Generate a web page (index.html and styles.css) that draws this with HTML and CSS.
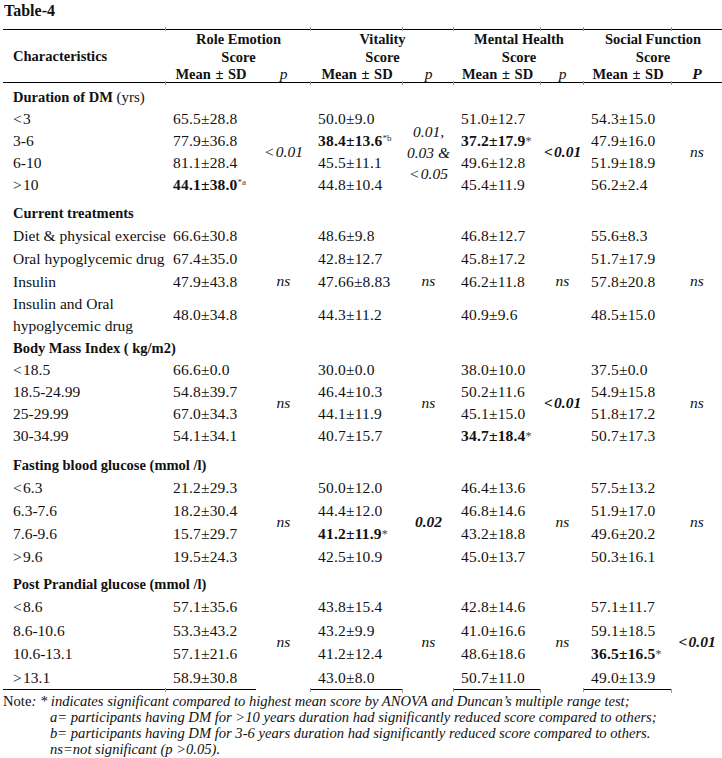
FILE: index.html
```html
<!DOCTYPE html>
<html lang="en">
<head>
<meta charset="utf-8">
<title>Table-4</title>
<link rel="stylesheet" href="styles.css">
</head>
<body>
<div class="title">Table-4</div>
<table class="t">
  <colgroup>
    <col class="w-char"><col class="w-m1"><col class="w-p1"><col class="w-m2"><col class="w-p2"><col class="w-m3"><col class="w-p3"><col class="w-m4"><col class="w-p4">
  </colgroup>
  <thead>
    <tr class="hr1">
      <th rowspan="2" class="hc">Characteristics</th>
      <th colspan="2">Role Emotion<br>Score</th>
      <th colspan="2">Vitality<br>Score</th>
      <th colspan="2">Mental Health<br>Score</th>
      <th colspan="2">Social Function<br>Score</th>
    </tr>
    <tr class="hr2">
      <th class="tk">Mean ± SD</th><th class="pi">p</th>
      <th class="tk">Mean ± SD</th><th class="pi tk">p</th>
      <th class="tk">Mean ± SD</th><th class="pi tk">p</th>
      <th class="tk">Mean ± SD</th><th class="pi tk">P</th>
    </tr>
  </thead>
  <tbody>
    <tr class="g g1"><td colspan="9" class="gh">Duration of DM <span class="rg">(yrs)</span></td></tr>
    <tr class="r22">
      <td class="c">&lt;&#8202;3</td><td class="v">65.5±28.8</td>
      <td class="p" rowspan="4">&lt;&#8202;0.01</td>
      <td class="v">50.0±9.0</td>
      <td class="p multi" rowspan="4">0.01,<br>0.03 &amp;<br>&lt;&#8202;0.05</td>
      <td class="v">51.0±12.7</td>
      <td class="p pb" rowspan="4">&lt;&#8202;0.01</td>
      <td class="v">54.3±15.0</td>
      <td class="p" rowspan="4">ns</td>
    </tr>
    <tr class="r22">
      <td class="c">3-6</td><td class="v">77.9±36.8</td>
      <td class="v"><b>38.4±13.6</b><span class="sup">*b</span></td>
      <td class="v"><b>37.2±17.9</b><span class="ast">*</span></td>
      <td class="v">47.9±16.0</td>
    </tr>
    <tr class="r22">
      <td class="c">6-10</td><td class="v">81.1±28.4</td>
      <td class="v">45.5±11.1</td>
      <td class="v">49.6±12.8</td>
      <td class="v">51.9±18.9</td>
    </tr>
    <tr class="r22">
      <td class="c">&gt;&#8202;10</td><td class="v"><b>44.1±38.0</b><span class="sup">*a</span></td>
      <td class="v">44.8±10.4</td>
      <td class="v">45.4±11.9</td>
      <td class="v">56.2±2.4</td>
    </tr>

    <tr class="g g2"><td colspan="9" class="gh">Current treatments</td></tr>
    <tr class="r23">
      <td class="c">Diet &amp; physical exercise</td><td class="v">66.6±30.8</td>
      <td class="p" rowspan="4">ns</td>
      <td class="v">48.6±9.8</td>
      <td class="p" rowspan="4">ns</td>
      <td class="v">46.8±12.7</td>
      <td class="p" rowspan="4">ns</td>
      <td class="v">55.6±8.3</td>
      <td class="p" rowspan="4">ns</td>
    </tr>
    <tr class="r23">
      <td class="c">Oral hypoglycemic drug</td><td class="v">67.4±35.0</td>
      <td class="v">42.8±12.7</td>
      <td class="v">45.8±17.2</td>
      <td class="v">51.7±17.9</td>
    </tr>
    <tr class="r23">
      <td class="c">Insulin</td><td class="v">47.9±43.8</td>
      <td class="v">47.66±8.83</td>
      <td class="v">46.2±11.8</td>
      <td class="v">57.8±20.8</td>
    </tr>
    <tr class="r43">
      <td class="c two">Insulin and Oral<br>hypoglycemic drug</td><td class="v">48.0±34.8</td>
      <td class="v">44.3±11.2</td>
      <td class="v">40.9±9.6</td>
      <td class="v">48.5±15.0</td>
    </tr>

    <tr class="g g3"><td colspan="9" class="gh">Body Mass Index ( kg/m2)</td></tr>
    <tr class="r22">
      <td class="c">&lt;&#8202;18.5</td><td class="v">66.6±0.0</td>
      <td class="p" rowspan="4">ns</td>
      <td class="v">30.0±0.0</td>
      <td class="p" rowspan="4">ns</td>
      <td class="v">38.0±10.0</td>
      <td class="p pb" rowspan="4">&lt;&#8202;0.01</td>
      <td class="v">37.5±0.0</td>
      <td class="p" rowspan="4">ns</td>
    </tr>
    <tr class="r22">
      <td class="c">18.5-24.99</td><td class="v">54.8±39.7</td>
      <td class="v">46.4±10.3</td>
      <td class="v">50.2±11.6</td>
      <td class="v">54.9±15.8</td>
    </tr>
    <tr class="r22">
      <td class="c">25-29.99</td><td class="v">67.0±34.3</td>
      <td class="v">44.1±11.9</td>
      <td class="v">45.1±15.0</td>
      <td class="v">51.8±17.2</td>
    </tr>
    <tr class="r22">
      <td class="c">30-34.99</td><td class="v">54.1±34.1</td>
      <td class="v">40.7±15.7</td>
      <td class="v"><b>34.7±18.4</b><span class="ast">*</span></td>
      <td class="v">50.7±17.3</td>
    </tr>

    <tr class="g g4"><td colspan="9" class="gh">Fasting blood glucose (mmol /l)</td></tr>
    <tr class="r23">
      <td class="c">&lt;&#8202;6.3</td><td class="v">21.2±29.3</td>
      <td class="p" rowspan="4">ns</td>
      <td class="v">50.0±12.0</td>
      <td class="p pb" rowspan="4">0.02</td>
      <td class="v">46.4±13.6</td>
      <td class="p" rowspan="4">ns</td>
      <td class="v">57.5±13.2</td>
      <td class="p" rowspan="4">ns</td>
    </tr>
    <tr class="r23">
      <td class="c">6.3-7.6</td><td class="v">18.2±30.4</td>
      <td class="v">44.4±12.0</td>
      <td class="v">46.8±14.6</td>
      <td class="v">51.9±17.0</td>
    </tr>
    <tr class="r23">
      <td class="c">7.6-9.6</td><td class="v">15.7±29.7</td>
      <td class="v"><b>41.2±11.9</b><span class="ast">*</span></td>
      <td class="v">43.2±18.8</td>
      <td class="v">49.6±20.2</td>
    </tr>
    <tr class="r23">
      <td class="c">&gt;&#8202;9.6</td><td class="v">19.5±24.3</td>
      <td class="v">42.5±10.9</td>
      <td class="v">45.0±13.7</td>
      <td class="v">50.3±16.1</td>
    </tr>

    <tr class="g g5"><td colspan="9" class="gh">Post Prandial glucose (mmol /l)</td></tr>
    <tr class="r24">
      <td class="c">&lt;&#8202;8.6</td><td class="v">57.1±35.6</td>
      <td class="p" rowspan="4">ns</td>
      <td class="v">43.8±15.4</td>
      <td class="p tkb" rowspan="4">ns</td>
      <td class="v">42.8±14.6</td>
      <td class="p tkb" rowspan="4">ns</td>
      <td class="v">57.1±11.7</td>
      <td class="p pb tkb" rowspan="4">&lt;&#8202;0.01</td>
    </tr>
    <tr class="r23">
      <td class="c">8.6-10.6</td><td class="v">53.3±43.2</td>
      <td class="v">43.2±9.9</td>
      <td class="v">41.0±16.6</td>
      <td class="v">59.1±18.5</td>
    </tr>
    <tr class="r24">
      <td class="c">10.6-13.1</td><td class="v">57.1±21.6</td>
      <td class="v">41.2±12.4</td>
      <td class="v">48.6±18.6</td>
      <td class="v"><b>36.5±16.5</b><span class="ast">*</span></td>
    </tr>
    <tr class="r23 last">
      <td class="c">&gt;&#8202;13.1</td><td class="v tkb">58.9±30.8</td>
      <td class="v tkb">43.0±8.0</td>
      <td class="v tkb">50.7±11.0</td>
      <td class="v tkb">49.0±13.9</td>
    </tr>
  </tbody>
</table>
<div class="note">
  <p class="nl">Note<i>: * indicates significant compared to highest mean score by ANOVA and Duncan’s multiple range test;</i></p>
  <p class="nl ind"><i>a= participants having DM for &gt;10 years duration had significantly reduced score compared to others;</i></p>
  <p class="nl ind"><i>b= participants having DM for 3-6 years duration had significantly reduced score compared to others.</i></p>
  <p class="nl ind"><i>ns=not significant (p &gt;0.05).</i></p>
</div>
</body>
</html>
```

FILE: styles.css
```css
html, body {
  margin: 0;
  padding: 0;
  background: #ffffff;
}

body {
  font-family: "Liberation Serif", "Times New Roman", serif;
  color: #111111;
  width: 722px;
  overflow: hidden;
}

.title {
  height: 29px;
  padding-left: 4px;
  font-size: 16px;
  font-weight: bold;
  line-height: 22px;
}

.t {
  border-collapse: collapse;
  table-layout: fixed;
  width: 719px;
  margin-left: 3px;
  font-size: 15.5px;
}

.w-char { width: 163px; }
.w-m1 { width: 90px; }
.w-p1 { width: 55px; }
.w-m2 { width: 92px; }
.w-p2 { width: 51px; }
.w-m3 { width: 87px; }
.w-p3 { width: 43px; }
.w-m4 { width: 88px; }
.w-p4 { width: 50px; }

th {
  padding: 0;
  font-size: 14.5px;
  font-weight: bold;
  text-align: center;
  white-space: nowrap;
}

.hr1 th {
  border-top: 1px solid #000;
  height: 36px;
  line-height: 18px;
  vertical-align: top;
}

.hr1 th.hc {
  text-align: left;
  padding-left: 10px;
  vertical-align: middle;
  border-bottom: 1px solid #000;
}

.hr2 th {
  position: relative;
  height: 16px;
  line-height: 16px;
  border-bottom: 1px solid #000;
  vertical-align: top;
  word-spacing: 1px;
}

.hr2 th.pi {
  font-style: italic;
  font-weight: normal;
  font-size: 15.5px;
}

.hr2 th.pi:last-child {
  font-weight: bold;
}

/* faint grid ticks where the Word table's cell edges meet the rules */
.hr2 th.tk::before,
.hr2 th.tk::after,
td.tkb::after {
  content: "";
  position: absolute;
  left: -1px;
  width: 1px;
  height: 4px;
  background: #9a9a9a;
}

.hr2 th.tk::before { top: -39px; }
.hr2 th.tk::after { bottom: -3px; }

td {
  padding: 0;
  white-space: nowrap;
  vertical-align: middle;
  line-height: 22px;
}

td.tkb {
  position: relative;
}

td.tkb::after {
  bottom: -3px;
}

td.gh {
  font-weight: bold;
  font-size: 14.5px;
  padding-left: 10px;
  vertical-align: bottom;
}

.rg { font-weight: normal; font-size: 15px; }

.g1 td { height: 25px; }
.g2 td { height: 28px; }
.g3 td { height: 22px; vertical-align: middle; }
.g4 td { height: 29px; }
.g5 td { height: 27px; }

.r22 td { height: 22px; }
.r23 td { height: 23px; }
.r24 td { height: 24px; }
.r43 td { height: 43px; }

td.c {
  padding-left: 10px;
}

td.two {
  line-height: 22px;
}

td.v {
  padding-left: 7px;
  letter-spacing: 0.2px;
}

td.p {
  text-align: center;
  font-style: italic;
}

td.multi {
  line-height: 21px;
}

td.pb {
  font-weight: bold;
}

.sup {
  font-size: 9px;
  vertical-align: 5px;
  line-height: 0;
  color: #333;
  letter-spacing: 0;
}

.ast {
  font-size: 12px;
  color: #444;
  vertical-align: 1px;
  letter-spacing: 0;
}

.last td {
  border-bottom: 1px solid #000;
}

.note {
  padding: 3px 0 0 3px;
  font-size: 14.6px;
  line-height: 16px;
}

.nl {
  margin: 0;
  white-space: nowrap;
}

.ind {
  padding-left: 47px;
}
```
